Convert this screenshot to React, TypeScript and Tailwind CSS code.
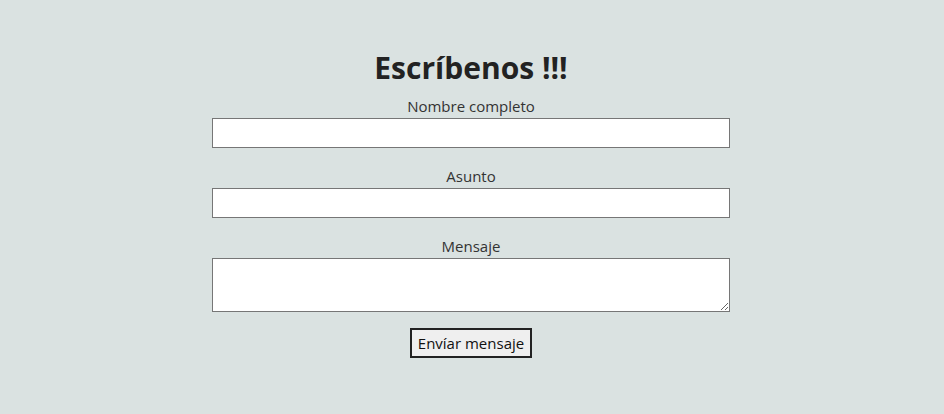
import React from 'react';

const App: React.FC = () => {
  return (
    <div className="min-h-[414px] bg-[#dae2e1] pr-[2px] text-[#222] font-['Segoe_UI','Open_Sans',sans-serif]">
      <form className="mx-auto flex w-[518px] flex-col items-center pt-[45px]">
        {/* Title */}
        <h1 className="mb-[3px] text-[30px] font-bold leading-[46px] text-[#222]">Escríbenos !!!</h1>

        <label className="text-[15px] leading-[24px] text-[#333]">Nombre completo</label>
        <input type="text" className="h-[30px] w-full border border-[#767676] bg-white" />

        <label className="mt-[16px] text-[15px] leading-[24px] text-[#333]">Asunto</label>
        <input type="text" className="h-[30px] w-full border border-[#767676] bg-white" />

        <label className="mt-[16px] text-[15px] leading-[24px] text-[#333]">Mensaje</label>
        <textarea className="h-[54px] w-full border border-[#767676] bg-white" />

        <button
          type="button"
          className="mt-[16px] h-[30px] w-[122px] border-2 border-[#222] bg-[#efefef] text-[15px] text-[#111]"
        >
          Envíar mensaje
        </button>
      </form>
    </div>
  );
};

export default App;
